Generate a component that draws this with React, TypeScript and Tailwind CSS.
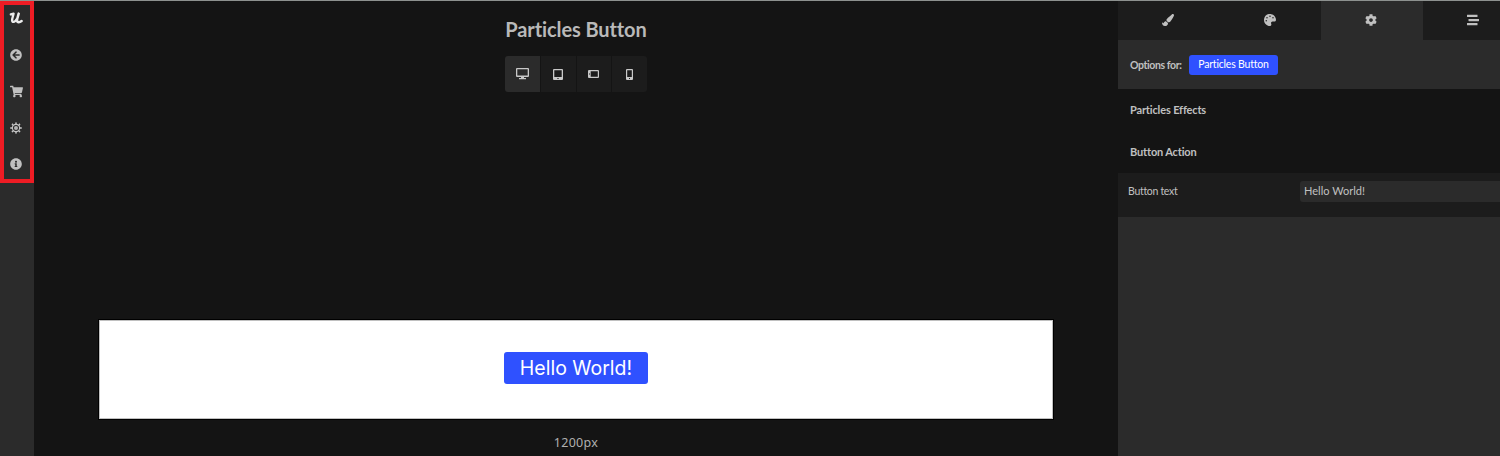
import React from "react";
import {
  FaArrowCircleLeft,
  FaShoppingCart,
  FaInfoCircle,
  FaPaintBrush,
  FaPalette,
  FaCog,
  FaStream,
} from "react-icons/fa";

function Logo() {
  return (
    <svg width="14" height="12" viewBox="0 0 14 12" fill="none" stroke="#ececec" strokeLinecap="round" strokeLinejoin="round">
      <path d="M1.8 2.4 L4.6 1.6 C4.2 4 3 6.4 3.1 8.5 C3.3 10.9 5.9 10.2 7.6 7.2" strokeWidth="2.3" />
      <path d="M9.7 1.6 C9.2 4 7.9 6.6 8 8.7 C8.2 10.7 10.8 10.4 12.6 9" strokeWidth="2.5" />
    </svg>
  );
}

const spokes = [0, 45, 90, 135, 180, 225, 270, 315];

function WheelIcon() {
  return (
    <svg width="12" height="12" viewBox="0 0 12 12" fill="none" stroke="#c4c4c4">
      <circle cx="6" cy="6" r="3.6" strokeWidth="1.1" />
      <circle cx="6" cy="6" r="2" fill="#b4b4b4" stroke="none" />
      {spokes.map((angle) => (
        <path key={angle} d="M6 0.4V2.4M5.1 1H6.9" strokeWidth="1.2" transform={`rotate(${angle} 6 6)`} />
      ))}
    </svg>
  );
}

function DesktopIcon() {
  return (
    <svg width="13" height="12" viewBox="0 0 13 12" fill="#c8c8c8">
      <path fillRule="evenodd" d="M1 0h11a1 1 0 0 1 1 1v7a1 1 0 0 1-1 1H1a1 1 0 0 1-1-1V1a1 1 0 0 1 1-1Zm.3 1.2v6.2h10.4V1.2Z" />
      <path d="M5 9h3v1h2v1.2H3V10h2Z" />
    </svg>
  );
}

function TabletIcon() {
  return (
    <svg width="10" height="11" viewBox="0 0 10 11" fill="#c8c8c8">
      <path fillRule="evenodd" d="M1 0h8a1 1 0 0 1 1 1v9a1 1 0 0 1-1 1H1a1 1 0 0 1-1-1V1a1 1 0 0 1 1-1Zm.3 1.2v6.9h7.4V1.2ZM4.4 9v1h1.2V9Z" />
    </svg>
  );
}

function LandscapeIcon() {
  return (
    <svg width="11" height="8" viewBox="0 0 11 8" fill="#c8c8c8">
      <path fillRule="evenodd" d="M1 0h9a1 1 0 0 1 1 1v6a1 1 0 0 1-1 1H1a1 1 0 0 1-1-1V1a1 1 0 0 1 1-1Zm1.7 1.2v5.6h7.1V1.2ZM1 3.4v1.2h1V3.4Z" />
    </svg>
  );
}

function PhoneIcon() {
  return (
    <svg width="7" height="11" viewBox="0 0 7 11" fill="#c8c8c8">
      <path fillRule="evenodd" d="M1 0h5a1 1 0 0 1 1 1v9a1 1 0 0 1-1 1H1a1 1 0 0 1-1-1V1a1 1 0 0 1 1-1Zm.2 1.2v6.9h4.6V1.2ZM3 9v1h1V9Z" />
    </svg>
  );
}

function Sidebar() {
  return (
    <aside className="w-[34px] shrink-0 bg-[#2b2b2b]">
      <nav className="flex h-[182px] flex-col items-center border-4 border-[#ee1c24] pr-[2px] text-[#c0c0c0]">
        <div className="flex h-[31px] shrink-0 items-center pb-[5px]"><Logo /></div>
        <div className="flex h-[37px] shrink-0 items-center"><FaArrowCircleLeft size={12} /></div>
        <div className="flex h-[36px] shrink-0 items-center"><FaShoppingCart size={13} /></div>
        <div className="flex h-[37px] shrink-0 items-center"><WheelIcon /></div>
        <div className="flex h-[36px] shrink-0 items-center"><FaInfoCircle size={12} /></div>
      </nav>
    </aside>
  );
}

function Workspace() {
  return (
    <main className="flex min-w-0 flex-1 flex-col items-center bg-[#141414]">
      <h1 className="mt-[15px] h-[26px] whitespace-nowrap font-['Lato'] text-[20px] leading-[26px] font-bold tracking-[-0.1px] text-[#b9b9b9]">
        Particles Button
      </h1>
      <div className="mt-[14px] flex h-[36px] w-[142px] gap-px overflow-hidden rounded-[3px]">
        <button className="flex flex-1 items-center justify-center bg-[#2b2b2b]"><DesktopIcon /></button>
        <button className="flex flex-1 items-center justify-center bg-[#1c1c1c]"><TabletIcon /></button>
        <button className="flex flex-1 items-center justify-center bg-[#1c1c1c]"><LandscapeIcon /></button>
        <button className="flex flex-1 items-center justify-center bg-[#1c1c1c]"><PhoneIcon /></button>
      </div>
      <div className="mt-[228px] flex h-[99px] w-[954px] justify-center border border-[#c0c0c0] bg-white outline outline-black">
        <button className="mt-[31px] h-[32px] w-[144px] rounded-[3px] bg-[#2f51ff] font-['Inter'] text-[19.5px] leading-[32px] whitespace-nowrap text-white">
          Hello World!
        </button>
      </div>
      <p className="mt-[15px] font-['Noto_Sans'] text-[12.5px] leading-[18px] tracking-[0.3px] text-[#b0b0b0]">1200px</p>
    </main>
  );
}

function Panel() {
  return (
    <section className="w-[382px] shrink-0 overflow-hidden bg-[#2b2b2b] font-['Lato'] text-[#c0c0c0]">
      <div className="flex h-[39px] w-[406px]">
        <button className="flex w-[101px] items-center justify-center bg-[#1c1c1c] pr-[2px] pb-[2px]"><FaPaintBrush size={12} /></button>
        <button className="flex w-[102px] items-center justify-center bg-[#1c1c1c] pr-[1px] pb-[2px]"><FaPalette size={12} /></button>
        <button className="flex w-[102px] items-center justify-center pr-[2px] pb-[2px]"><FaCog size={12} /></button>
        <button className="flex w-[101px] items-center justify-center bg-[#1c1c1c] pr-[1px] pb-[2px]"><FaStream size={12} /></button>
      </div>
      <div className="flex h-[49px] items-center pl-3 text-[11px] whitespace-nowrap">
        <span className="w-[59px] pt-[2px] text-[10.5px] font-bold tracking-[-0.4px]">Options for:</span>
        <span className="flex h-[20px] w-[89px] items-center justify-center rounded-[3px] bg-[#2f51ff] text-[10.5px] tracking-[-0.2px] text-white">Particles Button</span>
      </div>
      <div className="flex h-[84px] flex-col bg-[#141414] pl-3 text-[11px] font-bold tracking-[-0.15px]">
        <div className="flex h-[42px] items-center">Particles Effects</div>
        <div className="flex h-[42px] items-center">Button Action</div>
      </div>
      <div className="flex h-[44px] items-start bg-[#1c1c1c] pt-2 pl-[10px] text-[11px] leading-[20px]">
        <span className="w-[172px] text-[10.5px] leading-[21px] tracking-[-0.3px]">Button text</span>
        <span className="h-[21px] flex-1 rounded-l-[3px] bg-[#2b2b2b] pl-1">Hello World!</span>
      </div>
    </section>
  );
}

export default function App() {
  return (
    <div className="flex h-[456px] w-[1500px] overflow-hidden border-t border-[#8d918f] bg-[#141414]">
      <Sidebar />
      <Workspace />
      <Panel />
    </div>
  );
}
